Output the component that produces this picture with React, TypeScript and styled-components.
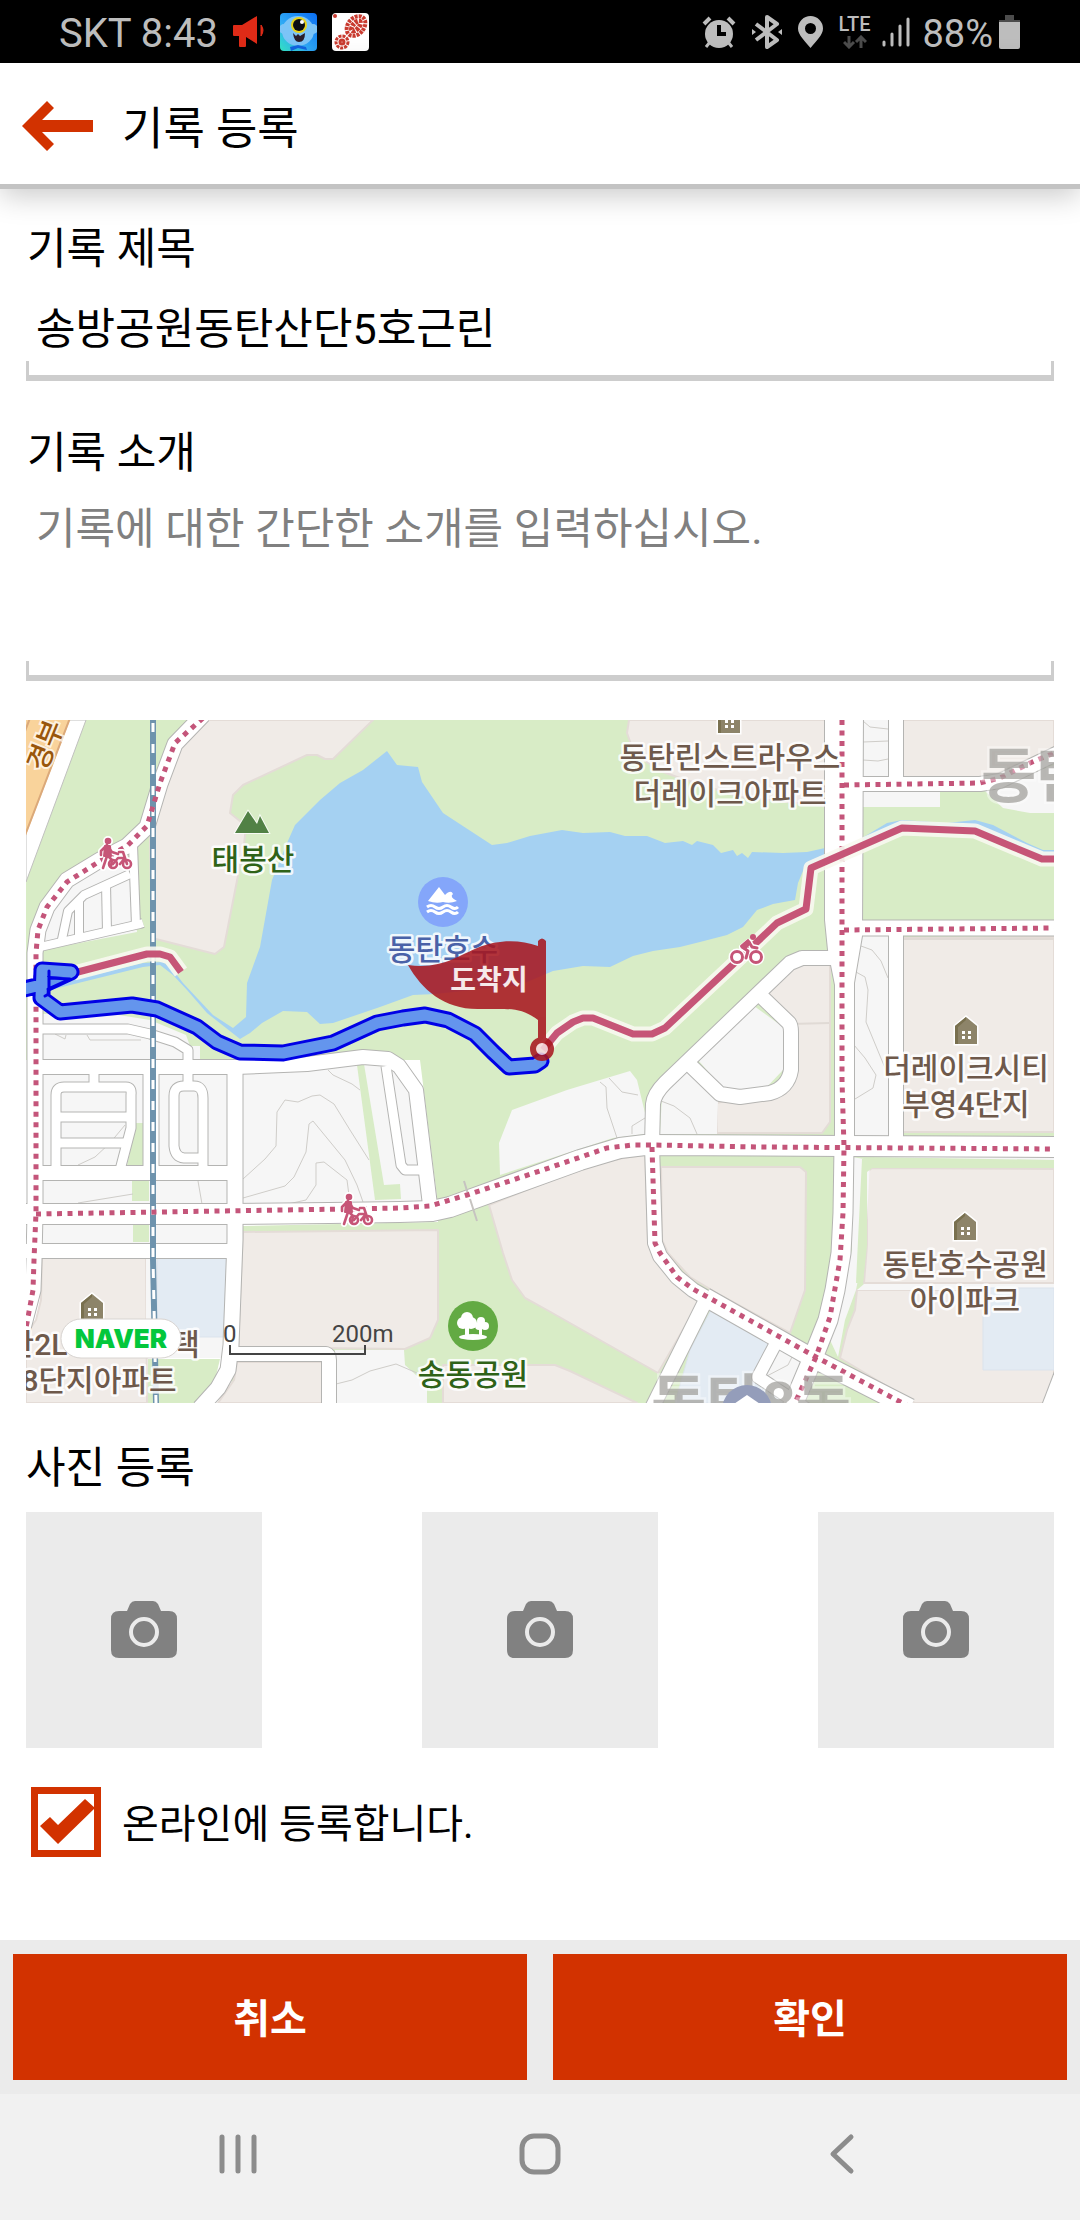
import React, { useState } from "react";
import styled, { createGlobalStyle } from "styled-components";

const RED = "#d23200";

const GlobalStyle = createGlobalStyle`
  *, *::before, *::after { box-sizing: border-box; }
  body {
    margin: 0;
    background: #fff;
    color: #000;
    font-family: Roboto, "Noto Sans CJK KR", sans-serif;
  }
  button, input, textarea { font-family: inherit; }
`;

const Page = styled.div`
  display: flex;
  flex-direction: column;
  min-height: 100vh;
  background: #fff;
`;

/* ---------- status bar ---------- */

const StatusBar = styled.div`
  display: flex;
  align-items: center;
  justify-content: space-between;
  height: 63px;
  padding: 0 60px 0 59px;
  background: #000;
  color: #bdbdbd;
`;

const StatusGroup = styled.div<{ $gap: number }>`
  display: flex;
  align-items: center;
  gap: ${(p) => p.$gap}px;
`;

const StatusText = styled.span<{ $size: number }>`
  padding-top: 4px;
  font-size: ${(p) => p.$size}px;
  line-height: 48px;
`;

const Lte = styled.div`
  display: flex;
  flex-direction: column;
  align-items: center;
  gap: 2px;
  font-size: 20px;
  font-weight: 500;
  line-height: 18px;
`;

/* ---------- header ---------- */

const Header = styled.header`
  display: flex;
  align-items: center;
  gap: 28px;
  height: 126px;
  padding: 4px 22px 0;
  border-bottom: 5px solid #c3c3c3;
  background: #fff;
  box-shadow: 0 6px 28px rgba(0, 0, 0, 0.22);
`;

const IconButton = styled.button`
  display: flex;
  align-items: center;
  justify-content: center;
  padding: 0;
  border: 0;
  background: none;
  cursor: pointer;
`;

const Title = styled.h1`
  margin: 0;
  padding-top: 8px;
  font-size: 45px;
  font-weight: 400;
  line-height: 60px;
`;

/* ---------- form ---------- */

const Form = styled.form`
  display: flex;
  flex: 1;
  flex-direction: column;
`;

const Content = styled.main`
  flex: 1;
  padding: 30px 26px 40px;
`;

const Field = styled.div`
  margin-bottom: 42px;
`;

const Label = styled.label`
  display: block;
  padding: 0 1px;
  font-size: 43px;
  line-height: 60px;
`;

const Heading = styled.h2`
  margin: 35px 0 14px;
  font-size: 43px;
  font-weight: 400;
  line-height: 60px;
`;

const tray = `
  display: block;
  width: 100%;
  padding: 16px 10px 20px;
  border: 0;
  border-bottom: 6px solid #cdcdcd;
  border-radius: 0;
  outline: 0;
  background:
    linear-gradient(#cdcdcd, #cdcdcd) left bottom / 3px 14px no-repeat,
    linear-gradient(#cdcdcd, #cdcdcd) right bottom / 3px 14px no-repeat;
  color: #000;
  font-size: 43px;
  line-height: 60px;
`;

const TextInput = styled.input`
  ${tray}
  height: 102px;
`;

const TextArea = styled.textarea`
  ${tray}
  height: 198px;
  resize: none;
  &::placeholder { color: #808080; opacity: 1; }
`;

const MapFrame = styled.div`
  margin-top: -3px;
  svg { display: block; width: 100%; height: auto; }
`;

const PhotoRow = styled.div`
  display: flex;
  justify-content: space-between;
`;

const PhotoSlot = styled.button`
  display: flex;
  align-items: center;
  justify-content: center;
  width: 236px;
  height: 236px;
  padding: 0;
  border: 0;
  background: #ebebeb;
  cursor: pointer;
`;

const CheckLabel = styled.label`
  display: flex;
  align-items: center;
  gap: 21px;
  margin: 39px 5px 0;
  font-size: 40px;
  line-height: 60px;
`;

const CheckText = styled.span`
  padding-top: 5px;
`;

const CheckCell = styled.span`
  display: grid;
  > * { grid-area: 1 / 1; }
  svg { pointer-events: none; }
`;

const CheckInput = styled.input`
  width: 70px;
  height: 70px;
  margin: 0;
  border: 7px solid ${RED};
  border-radius: 0;
  background: #fff;
  appearance: none;
`;

const Actions = styled.footer`
  display: flex;
  gap: 26px;
  padding: 14px 13px;
  background: #ebebeb;
`;

const ActionButton = styled.button`
  flex: 1;
  height: 126px;
  padding: 5px 0 0;
  border: 0;
  background: ${RED};
  color: #fff;
  font-size: 40px;
  font-weight: 700;
  line-height: 60px;
  cursor: pointer;
`;

const SystemNav = styled.nav`
  display: flex;
  height: 126px;
  padding: 0 87px;
  background: #f1f1f1;
  ${IconButton} { flex: 1; padding-bottom: 6px; }
`;

/* ---------- map drawing ---------- */

const GREEN = "#d8ecc6";
const BEIGE = "#f0ebe7";
const GRAY = "#f6f6f6";
const PALE = "#e3ebf3";
const WATER = "#a5d1f2";
const CYCLE = "#c65577";

const mapFont = 'Roboto, "Noto Sans CJK KR", sans-serif';

const beige = [
  "207,720 373,720 333,759 325,759 317,755 307,755 243,785 233,795 230,813 246,826 244,845 224,947 215,954 152,938 150,840 160,790 180,743",
  "629,720 627,733 633,750 645,761 663,772 680,778 740,797 825,806 825,720",
  "903,720 1054,720 1054,748 1022,762 990,777 903,777",
  "903,938 1054,937 1054,1132 903,1132",
  "768,993 793,967 803,965 830,965 830,1122 822,1133 717,1133 717,1103 780,1087 790,1060 790,1020",
  "42,1258 146,1258 147,1403 26,1403 26,1335 36,1320 41,1300",
  "243,1232 438,1230 438,1320 430,1338 405,1349 238,1347",
  "237,1362 322,1362 322,1403 218,1403 234,1380",
  "443,1403 443,1365 555,1365 570,1371 637,1403",
  "489,1205 582,1168 623,1158 645,1155 648,1240 655,1260 683,1290 699,1302 658,1373 547,1310 525,1298 512,1280 503,1253",
  "661,1167 800,1167 806,1172 805,1290 790,1333 720,1295 690,1277 668,1253 662,1240",
  "872,1168 1054,1169 1054,1283 864,1283 867,1245 867,1172",
  "857,1290 1054,1290 1054,1403 915,1403 840,1358 847,1330 855,1310",
];

const gray = [
  "43,950 46,918 62,893 100,868 133,857 137,932",
  "42,1014 100,1012 150,1020 186,1035 190,1046 200,1046 200,1060 42,1060",
  "863,720 888,720 888,777 863,777",
  "863,791 940,791 940,807 863,807",
  "985,791 1003,808 1030,813 1054,813 1054,765",
  "861,936 888,936 889,1136 854,1136 854,983",
  "42,1074 144,1074 144,1166 42,1166",
  "159,1074 227,1074 227,1166 159,1166",
  "242,1074 310,1071 360,1064 381,1065 397,1168 403,1174 420,1174 423,1201 243,1204",
  "391,1068 408,1093 419,1164 405,1166",
  "42,1179 228,1179 228,1204 42,1204",
  "42,1224 228,1224 228,1243 42,1243",
  "335,1350 404,1350 405,1365 427,1385 427,1403 335,1403",
  "512,1110 567,1090 600,1080 630,1071 637,1080 645,1113 645,1134 613,1138 567,1153 500,1175 499,1143",
  "750,1003 783,1027 783,1070 765,1089 725,1091 698,1060",
  "660,1134 662,1095 687,1070 718,1100 717,1134",
  "852,1157 870,1160 866,1240 856,1290 845,1320 838,1357 830,1340 852,1250",
  "872,1157 1054,1160 1054,1154 872,1154",
  "779,1347 803,1360 790,1390 765,1377",
  "148,1337 223,1337 222,1358 148,1358",
  "146,1258 157,1258 157,1337 146,1337",
  "864,1284 1054,1284 1054,1290 857,1290",
];

const pale = [
  "157,1258 227,1258 223,1337 157,1337",
  "712,1308 770,1340 757,1370 790,1403 675,1403 690,1350",
  "983,1288 1054,1288 1054,1370 983,1370",
];

const parks = [
  "136,1123 144,1123 144,1166 127,1166",
  "357,1065 364,1064 384,1185 400,1184 401,1199 375,1200",
  "132,1181 149,1181 149,1201 132,1201",
  "133,1225 149,1225 149,1242 133,1242",
  "862,1159 1054,1163 1054,1168 872,1168 867,1172 867,1245 863,1283 856,1283 858,1240",
];

const contours = [
  "243,1179 265,1159 276,1146 277,1112 285,1100 298,1102 312,1096 320,1095 334,1104 350,1130 369,1160",
  "243,1198 285,1186 294,1177 306,1152 309,1124 313,1121 345,1160 357,1185 363,1202",
  "243,1214 306,1200 316,1185 316,1163 324,1162 347,1180 350,1203",
  "328,1070 333,1075 352,1084 360,1090",
  "198,1181 202,1204",
  "78,1203 133,1194",
  "78,1165 95,1157 110,1143 125,1125",
  "336,1384 352,1380 370,1371 396,1364 417,1373",
  "600,1082 606,1087 607,1108 617,1138",
  "609,1078 622,1092 638,1095",
  "632,1134 632,1126 645,1118",
  "661,1101 674,1106 690,1118 697,1134",
  "863,721 870,727 888,729",
  "863,742 888,741",
  "863,760 878,761 888,759",
  "861,946 872,950 881,961 888,978",
  "856,972 865,977 868,990 866,1022 890,1080",
  "854,1045 865,1058 876,1075 873,1088 855,1099",
  "765,1377 788,1365 793,1355",
  "55,1034 65,1039 66,1035",
  "87,1035 90,1040 141,1040",
];

const roads: [string, number][] = [
  ["M203 715L175 744L160 784L147 827L127 846L100 860L67 880L47 907L38 930L35 953V1213L34 1260L33 1290L22 1332", 15],
  ["M130 874L84 895L68 911L61 944", 8],
  ["M79 899V938", 8],
  ["M106 884L107 932", 8],
  ["M133 845L136 925", 8],
  ["M40 947L140 924L143 923", 8],
  ["M42 1029H128L150 1034L175 1042L188 1050V1062", 9],
  ["M35 1067H235L307 1064L363 1057L388 1059L399 1066L416 1090L430 1205", 14],
  ["M386 1066L401 1165L405 1170H424", 9],
  ["M56 1170V1095Q56 1087 64 1087H126Q132 1087 131 1095V1128L120 1170", 9],
  ["M56 1117H131", 9],
  ["M56 1143H125", 9],
  ["M94 1074V1087", 9],
  ["M203 1170V1098Q203 1086 194 1086H184Q174 1086 174 1096V1146Q175 1157 184 1158H203", 9],
  ["M188 1070V1086", 9],
  ["M151 1060V1175", 15],
  ["M235 1060V1240L231 1345L228 1370L218 1388L200 1408", 15],
  ["M35 1173H235", 14],
  ["M26 1251H233", 14],
  ["M231 1354H326Q329 1355 329 1360V1408", 14],
  ["M20 1214H230L330 1213L400 1212L432 1211L450 1207L580 1160L620 1148L645 1145L844 1146L1060 1147", 20],
  ["M840 784H980L1000 781L1060 752", 14],
  ["M840 928H1060", 15],
  ["M896 715V784M896 928V1145", 14],
  ["M838 958H802L790 963L665 1083Q654 1094 653 1104L652 1145", 14],
  ["M762 997L789 1023Q791 1026 791 1032V1070Q788 1088 770 1093L740 1097L720 1094L690 1065", 14],
  ["M652 1145L655 1243L660 1256L677 1277L693 1290L705 1297", 14],
  ["M705 1297L816 1360L910 1408", 18],
  ["M706 1300L650 1412", 14],
  ["M776 1343L758 1377L808 1410", 12],
  ["M844 1147L843 1213L841 1253L835 1290L828 1320L812 1360L790 1412", 19],
  ["M1062 1370L1046 1412", 12],
];

const avenue = "825,710 863,710 862,936 854,983 854,1150 835,1150 835,985 828,950 825,920";

const dotted = [
  "M203 718L175 743L160 783L147 826L127 846L100 861L67 882L47 907L38 930L36 953V1213L34 1260L33 1290L26 1328",
  "M36 1214L345 1209L400 1208L430 1206L467 1195L540 1171L607 1148L633 1145H652L760 1147L1054 1149",
  "M842 720L842 1080L844 1147L843 1213L840 1260L830 1317L816 1357L795 1403",
  "M844 785L980 783L1000 778L1030 763L1054 753",
  "M844 930L1054 928",
  "M652 1147L655 1243L660 1253L677 1277L693 1289L713 1300L816 1357L908 1406",
];

const lake =
  "M387 751L397 765L418 767L422 782L443 813L492 845L507 843L530 836L562 830L583 833L610 832L625 836H647L665 843L683 841L692 845L697 841L713 845L721 853L733 850L737 856L742 853L748 858L752 852L783 853L807 852L825 848V862L805 866L798 883L795 900L773 904L757 910L743 927L727 935L700 942L680 947L653 951L633 956L610 967L583 966L553 971L520 985L435 994L413 995L380 1007L333 1023L320 1024L307 1012L283 1011L262 1023L250 1033L240 1039L207 1013L187 990L173 975L160 965L143 967L50 990L77 979L143 963L163 962L173 970L183 983L213 1015L233 1028L246 1017L247 983L260 947L272 880L287 843L295 825L320 800L340 783L363 770Z";

const route =
  "M20 990L45 984L71 972L42 970L41 998L60 1012L132 1005L157 1009L197 1027L217 1042L240 1052L283 1053L333 1043L377 1023L403 1018L425 1015L448 1020L475 1034L493 1052L509 1067L535 1065L541 1061";

const cyclePaths = [
  "M1060 859H1042L1013 847L975 831L902 828L811 868L806 909L777 923L757 942L665 1028L652 1034H633L593 1018H583L573 1022L557 1033L543 1050",
  "M74 973L147 954H160L170 957L181 972",
];

type PlaceProps = { x: number; y: number; color?: string; children: React.ReactNode };

const Place = ({ x, y, color = "#6e594b", children }: PlaceProps) => (
  <text
    x={x}
    y={y}
    textAnchor="middle"
    fontFamily={mapFont}
    fontSize={30}
    fontWeight={500}
    fill={color}
    stroke="#fff"
    strokeOpacity={0.85}
    strokeWidth={5}
    strokeLinejoin="round"
    paintOrder="stroke"
  >
    {children}
  </text>
);

const House = ({ x, y }: { x: number; y: number }) => (
  <g transform={`translate(${x} ${y})`}>
    <path d="M-11 0V-18L0 -27L11 -18V0Z" fill="#8d8469" stroke="#fff" strokeWidth={3} paintOrder="stroke" />
    <path d="M-11 0V-18L0 -27V-24L-8 -17V0Z" fill="#79704f" />
    <path d="M-4 -13h3v3h-3zM2 -13h3v3h-3zM-4 -8h3v3h-3zM2 -8h3v3h-3z" fill="#fff" />
  </g>
);

const WalkBike = ({ x, y }: { x: number; y: number }) => {
  const shape = (
    <>
      <circle cx={8} cy={2} r={2} />
      <path d="M7 6L1 12V16M7 7V17L3 29M8 17L12 21L11 27M8 8L12 13L18 15" />
      <circle cx={13} cy={25} r={4} />
      <circle cx={27} cy={25} r={4} />
      <path d="M13 25L18 19H25L20 25M27 25L23 13H19" />
    </>
  );
  return (
    <g transform={`translate(${x} ${y})`} fill="none" strokeLinecap="round" strokeLinejoin="round">
      <g stroke="#fff" strokeWidth={6}>{shape}</g>
      <g stroke={CYCLE} strokeWidth={2.6}>{shape}</g>
      <circle cx={8} cy={2} r={2} fill={CYCLE} />
      <path d="M5 7H10L11 17H4Z" fill={CYCLE} stroke={CYCLE} strokeWidth={2} />
    </g>
  );
};

const Rider = ({ x, y }: { x: number; y: number }) => {
  const shape = (
    <>
      <circle cx={6} cy={23} r={5.5} />
      <circle cx={25} cy={23} r={5.5} />
      <path d="M17 8L11 13L17 17L15 24M18 8L21 13L26 14" />
    </>
  );
  return (
    <g transform={`translate(${x} ${y})`} strokeLinecap="round" strokeLinejoin="round">
      <g fill="#fff" stroke="#fff" strokeWidth={6}>{shape}</g>
      <g fill="none" stroke={CYCLE} strokeWidth={3}>{shape}</g>
      <circle cx={22} cy={3} r={3} fill={CYCLE} />
      <path d="M10 12L17 6L19 9L14 15Z" fill={CYCLE} stroke={CYCLE} strokeWidth={2} />
    </g>
  );
};

const polys = (items: string[], fill: string, stroke: string, width: number) =>
  items.map((points) => (
    <polygon key={points} points={points} fill={fill} stroke={stroke} strokeWidth={width} strokeLinejoin="round" />
  ));

const RouteMap = () => (
  <svg viewBox="26 720 1028 683" role="img" aria-label="기록 경로 지도">
    <rect x={26} y={720} width={1028} height={683} fill={GREEN} />
    {polys(["26,1060 230,1060 420,1060 438,1205 438,1222 243,1226 230,1403 26,1403"], "#fff", "none", 0)}
    <path d={lake} fill={WATER} />
    <path d="M862 838L887 823L902 820L947 823L975 820L993 825L1027 843L1043 850H1054V862L862 850Z" fill={WATER} />
    <path d="M863 845L902 829L975 832L1013 848L1042 859L1054 860V880H863Z" fill={GREEN} />
    {polys(beige, BEIGE, "#e4dcd7", 2)}
    {polys(gray, GRAY, "none", 0)}
    {polys(pale, PALE, "#dbe3ec", 1)}
    {polys(["148,1359 220,1359 215,1380 197,1403 148,1403"], GREEN, "none", 0)}
    {polys(parks, GREEN, "none", 0)}
    <g fill="none" stroke="#cfcdc9" strokeWidth={1}>
      {contours.map((points) => (
        <polyline key={points} points={points} />
      ))}
      <path d="M790 1024L829 1023M903 939H1054" stroke="#e0dad5" strokeWidth={2} />
    </g>

    {/* expressway */}
    <polygon points="26,720 86,720 26,882" fill="#fff" stroke="#c0c0be" />
    <polygon points="26,720 70,720 26,835" fill="#f9d39b" />
    <path d="M70 718L24 838M30 718L24 734" stroke="#dba97a" strokeWidth={2} />

    <g fill="none" stroke="#b4b4b2" strokeLinejoin="round">
      {roads.map(([d, w]) => (
        <path key={d} d={d} strokeWidth={w + 2} />
      ))}
      <polygon points={avenue} strokeWidth={2} />
    </g>
    <g fill="none" stroke="#fff" strokeLinejoin="round">
      {roads.map(([d, w]) => (
        <path key={d} d={d} strokeWidth={w} />
      ))}
    </g>
    <polygon points={avenue} fill="#fff" />
    <path d="M464 1181L468 1194M470 1199L477 1221" stroke="#c6c3c0" strokeWidth={2} />

    {/* railway */}
    <path d="M153 720V1258L156 1403" fill="none" stroke="#6e93ad" strokeWidth={6} />
    <path d="M153 723V1258L156 1403" fill="none" stroke="#fff" strokeWidth={3} strokeDasharray="9 12" />

    <g fill="none" stroke="#c4557a" strokeWidth={5} strokeDasharray="5 5.5">
      {dotted.map((d) => (
        <path key={d} d={d} />
      ))}
    </g>
    <g fill="none" strokeLinejoin="round">
      {cyclePaths.map((d) => (
        <path key={d} d={d} stroke="#f8f8f0" strokeWidth={15} strokeOpacity={0.9} />
      ))}
      {cyclePaths.map((d) => (
        <path key={d} d={d} stroke={CYCLE} strokeWidth={7} />
      ))}
    </g>
    <WalkBike x={100} y={839} />
    <WalkBike x={341} y={1195} />
    <Rider x={731} y={934} />

    <g fontFamily={mapFont} fontWeight={700} fontSize={60} fill="#9c9b97" fillOpacity={0.7} stroke="#fff" strokeOpacity={0.4} strokeWidth={5} paintOrder="stroke">
      <text x={981} y={797}>동탄</text>
      <text x={651} y={1424}>동탄8동</text>
    </g>
    <circle cx={747} cy={1410} r={25} fill="#949dba" />
    <path d="M731 1406L747 1395L763 1406Z" fill="#fff" />

    <text
      transform="translate(45 773) rotate(-68)"
      fontFamily={mapFont}
      fontWeight={500}
      fontSize={28}
      fill="#99560b"
      stroke="#fff"
      strokeWidth={4}
      strokeOpacity={0.7}
      paintOrder="stroke"
    >
      경부
    </text>

    <path d="M235 833L248 811L257 824L260 816L269 833Z" fill="#518145" stroke="#fff" strokeOpacity={0.8} strokeWidth={2} paintOrder="stroke" />
    <Place x={253} y={870} color="#2f6318">태봉산</Place>

    <House x={729} y={733} />
    <Place x={730} y={768}>동탄린스트라우스</Place>
    <Place x={730} y={804}>더레이크아파트</Place>
    <House x={966} y={1044} />
    <Place x={966} y={1079}>더레이크시티</Place>
    <Place x={966} y={1115}>부영4단지</Place>
    <House x={965} y={1240} />
    <Place x={965} y={1275}>동탄호수공원</Place>
    <Place x={965} y={1311}>아이파크</Place>
    <House x={92} y={1321} />
    <Place x={37} y={1355}>탄2L</Place>
    <Place x={186} y={1355}>택</Place>
    <Place x={99} y={1391}>8단지아파트</Place>

    <circle cx={473} cy={1326} r={25} fill="#63aa43" />
    <g fill="#fff">
      <circle cx={467} cy={1318} r={6} />
      <circle cx={463} cy={1323} r={6} />
      <circle cx={471} cy={1323} r={6} />
      <path d="M465 1326H469V1338H465ZM479 1328H482V1338H479Z" />
      <circle cx={481} cy={1321} r={4} />
      <circle cx={479} cy={1326} r={4} />
      <circle cx={485} cy={1326} r={4} />
      <ellipse cx={473} cy={1337} rx={14} ry={3} />
    </g>
    <Place x={473} y={1385} color="#2f6318">송동공원</Place>

    <circle cx={443} cy={902} r={25} fill="#84a6fa" />
    <path d="M428 901L439 887L445 895Q451 889 453 894Q449 897 457 901Q450 904 443 902Q436 904 428 901Z" fill="#fff" />
    <path d="M427 907q4 -3 8 0t8 0t8 0t7 0M427 912q4 -3 8 0t8 0t8 0t7 0" fill="none" stroke="#fff" strokeWidth={3} />
    <Place x={443} y={960} color="#4a62a8">동탄호수</Place>

    {/* recorded route */}
    <g fill="none" strokeLinejoin="round" strokeLinecap="round">
      <path d={route} stroke="#0000e6" strokeWidth={17} />
      <path d={route} stroke="#6495ed" strokeWidth={11} />
      <path d="M49 971V994L45 996M50 978L70 979L48 989" stroke="#0000e6" strokeWidth={3} />
    </g>

    {/* finish flag */}
    <g opacity={0.87}>
      <path
        d="M408 965C440 970 460 955 477 948C500 939 520 940 538 946V941Q542 936 546 941V1040H538V1020C520 1007 510 1009 480 1009C445 1010 422 990 408 965Z"
        fill="#a8161e"
      />
      <circle cx={542} cy={1049} r={9} fill="#f5dadd" stroke="#a8161e" strokeWidth={6} />
    </g>
    <text x={489} y={990} textAnchor="middle" fontFamily={mapFont} fontSize={28} fontWeight={700} fill="#f6e9ea">도착지</text>

    <rect x={61} y={1319} width={120} height={39} rx={20} fill="#fff" stroke="#d8d4d1" strokeWidth={1} />
    <text x={121} y={1348} textAnchor="middle" fontFamily="Inter, sans-serif" fontSize={26} fontWeight={900} fill="#03c73c">NAVER</text>
    <g fontFamily={mapFont} fontSize={24} fill="#444">
      <text x={223} y={1342}>0</text>
      <text x={332} y={1342}>200m</text>
    </g>
    <path d="M230 1345V1354H365V1345" fill="none" stroke="#444" strokeWidth={2} />
  </svg>
);

/* ---------- small icons ---------- */

const Megaphone = () => (
  <svg width={32} height={32} viewBox="0 0 32 32" fill="#df2b17">
    <path d="M0 10Q0 9 1 9H9L24 0V28L13 21V30Q13 31 12 31H7Q6 31 6 30V20H1Q0 20 0 19Z" />
    <path d="M28 9Q32 14 28 20Z" stroke="#df2b17" />
  </svg>
);

const MonsterApp = () => (
  <svg width={37} height={38} viewBox="0 0 37 38">
    <defs>
      <linearGradient id="monster" x1="1" y1="0" x2="0" y2="1">
        <stop offset="0" stopColor="#0a6df2" />
        <stop offset="0.6" stopColor="#2fa9f5" />
        <stop offset="1" stopColor="#35e6c4" />
      </linearGradient>
    </defs>
    <rect width={37} height={38} rx={4} fill="url(#monster)" />
    <ellipse cx={18} cy={18} rx={16} ry={15} fill="#7cc4f7" />
    <circle cx={4} cy={16} r={5} fill="#7cc4f7" />
    <circle cx={33} cy={16} r={5} fill="#7cc4f7" />
    <circle cx={19} cy={12} r={8} fill="#e8d21c" />
    <circle cx={19} cy={12} r={6} fill="#0b0b14" />
    <circle cx={22} cy={9} r={2} fill="#fff" />
    <path d="M13 20L16 23L18 21L20 23L25 20Q25 29 19 29Q14 29 13 20Z" fill="#2a1e2c" />
    <path d="M10 34L18 32L26 34L27 37L18 35L11 38Z" fill="#1264e0" />
  </svg>
);

const FootprintApp = () => (
  <svg width={37} height={38} viewBox="0 0 37 38">
    <rect width={37} height={38} rx={4} fill="#fff" />
    <circle cx={3} cy={3} r={2} fill="#c93b30" />
    <g fill="none" stroke="#c93b30">
      <ellipse cx={24} cy={13} rx={8} ry={11} transform="rotate(40 24 13)" strokeWidth={4} strokeDasharray="3 1" />
      <ellipse cx={24} cy={13} rx={3} ry={6} transform="rotate(40 24 13)" strokeWidth={5} strokeDasharray="3 1" />
      <circle cx={10} cy={29} r={6} strokeWidth={3} strokeDasharray="3 1" />
      <circle cx={10} cy={29} r={2} strokeWidth={3} />
    </g>
  </svg>
);

const Alarm = () => (
  <svg width={34} height={32} viewBox="0 0 34 32">
    <g stroke="#bdbdbd" strokeWidth={4}>
      <path d="M2 8L8 2M32 8L26 2" />
      <path d="M8 26L4 31M26 26L30 31" strokeWidth={3} />
    </g>
    <circle cx={17} cy={18} r={14} fill="#bdbdbd" />
    <path d="M17 9V18H24" fill="none" stroke="#000" strokeWidth={4} />
  </svg>
);

const Bluetooth = () => (
  <svg width={30} height={34} viewBox="0 0 30 34" fill="none" stroke="#bdbdbd" strokeWidth={4}>
    <path d="M4 9L25 25L15 32V2L25 9L4 25" strokeLinejoin="round" />
    <path d="M0 14L4 17L0 20ZM30 14L26 17L30 20Z" fill="#bdbdbd" stroke="none" />
  </svg>
);

const Pin = () => (
  <svg width={25} height={32} viewBox="0 0 25 32">
    <path fillRule="evenodd" fill="#bdbdbd" d="M12.500 0A12.500 12.500 0 0 0 0 12.500C0 19 7 25 12.500 32C18 25 25 19 25 12.500A12.500 12.500 0 0 0 12.500 0ZM12.500 7A5.500 5.500 0 1 1 12.500 18A5.500 5.500 0 1 1 12.500 7Z" />
  </svg>
);

const DataArrows = () => (
  <svg width={24} height={14} viewBox="0 0 24 14" fill="none" stroke="#4c4c4c" strokeWidth={3}>
    <path d="M6 1V12M1 7L6 12L11 7M18 13V2M13 7L18 2L23 7" />
  </svg>
);

const Signal = () => (
  <svg width={28} height={32} viewBox="0 0 28 32" stroke="#bdbdbd" strokeWidth={3} strokeLinecap="round">
    <path d="M2 26V29M10 18V29M18 10V29M26 3V29" />
  </svg>
);

const Battery = () => (
  <svg width={21} height={34} viewBox="0 0 21 34">
    <path d="M6 0H15V5H21V9H0V5H6Z" fill="#4c4c4c" />
    <path d="M0 7H21V32Q21 34 19 34H2Q0 34 0 32Z" fill="#bdbdbd" />
  </svg>
);

const Camera = () => (
  <svg width={66} height={58} viewBox="0 0 66 58">
    <path
      d="M8 10H16L19 3Q21 0 24 0H42Q45 0 47 3L50 10H58Q66 10 66 18V49Q66 57 58 57H8Q0 57 0 49V18Q0 10 8 10Z"
      fill="#818181"
    />
    <circle cx={33} cy={31} r={13} fill="none" stroke="#ebebeb" strokeWidth={4} />
  </svg>
);

/* ---------- screen ---------- */

export default function App() {
  const [title, setTitle] = useState("송방공원동탄산단5호근린");
  const [intro, setIntro] = useState("");
  const [online, setOnline] = useState(true);

  return (
    <Page>
      <GlobalStyle />
      <StatusBar>
        <StatusGroup $gap={15}>
          <StatusText $size={40}>SKT 8:43</StatusText>
          <Megaphone />
          <MonsterApp />
          <FootprintApp />
        </StatusGroup>
        <StatusGroup $gap={6}>
          <StatusGroup $gap={12}>
            <StatusGroup $gap={16}>
              <Alarm />
              <Bluetooth />
              <Pin />
              <Lte>
                <span>LTE</span>
                <DataArrows />
              </Lte>
            </StatusGroup>
            <Signal />
            <StatusText $size={38}>88%</StatusText>
          </StatusGroup>
          <Battery />
        </StatusGroup>
      </StatusBar>

      <Header>
        <IconButton type="button" aria-label="뒤로">
          <svg width={72} height={52} viewBox="0 0 72 52" fill={RED}>
            <path d="M0 26L25 1L32 8L20 20H71V32H20L32 44L25 51Z" />
          </svg>
        </IconButton>
        <Title>기록 등록</Title>
      </Header>

      <Form onSubmit={(e) => e.preventDefault()}>
        <Content>
          <Field>
            <Label htmlFor="title">기록 제목</Label>
            <TextInput id="title" value={title} onChange={(e) => setTitle(e.target.value)} />
          </Field>
          <Field>
            <Label htmlFor="intro">기록 소개</Label>
            <TextArea
              id="intro"
              placeholder="기록에 대한 간단한 소개를 입력하십시오."
              value={intro}
              onChange={(e) => setIntro(e.target.value)}
            />
          </Field>
          <MapFrame>
            <RouteMap />
          </MapFrame>
          <Heading>사진 등록</Heading>
          <PhotoRow>
            {[1, 2, 3].map((n) => (
              <PhotoSlot key={n} type="button" aria-label={`사진 ${n} 추가`}>
                <Camera />
              </PhotoSlot>
            ))}
          </PhotoRow>
          <CheckLabel>
            <CheckCell>
              <CheckInput type="checkbox" checked={online} onChange={(e) => setOnline(e.target.checked)} />
              {online && (
                <svg width={70} height={70} viewBox="0 0 70 70" fill={RED}>
                  <path d="M9 39L19 30L27 38L54 12L64 21L27 57Z" />
                </svg>
              )}
            </CheckCell>
            <CheckText>온라인에 등록합니다.</CheckText>
          </CheckLabel>
        </Content>
        <Actions>
          <ActionButton type="button">취소</ActionButton>
          <ActionButton type="submit">확인</ActionButton>
        </Actions>
      </Form>

      <SystemNav>
        <IconButton type="button" aria-label="최근 앱">
          <svg width={38} height={42} viewBox="0 0 38 42" stroke="#8c8c8c" strokeWidth={5} strokeLinecap="round">
            <path d="M3 4V38M19 4V38M35 4V38" />
          </svg>
        </IconButton>
        <IconButton type="button" aria-label="홈">
          <svg width={42} height={42} viewBox="0 0 42 42" fill="none" stroke="#8c8c8c" strokeWidth={5}>
            <rect x={3} y={3} width={36} height={36} rx={12} />
          </svg>
        </IconButton>
        <IconButton type="button" aria-label="이전">
          <svg width={26} height={42} viewBox="0 0 26 42" fill="none" stroke="#8c8c8c" strokeWidth={5} strokeLinecap="round" strokeLinejoin="round">
            <path d="M22 4L4 21L22 38" />
          </svg>
        </IconButton>
      </SystemNav>
    </Page>
  );
}
